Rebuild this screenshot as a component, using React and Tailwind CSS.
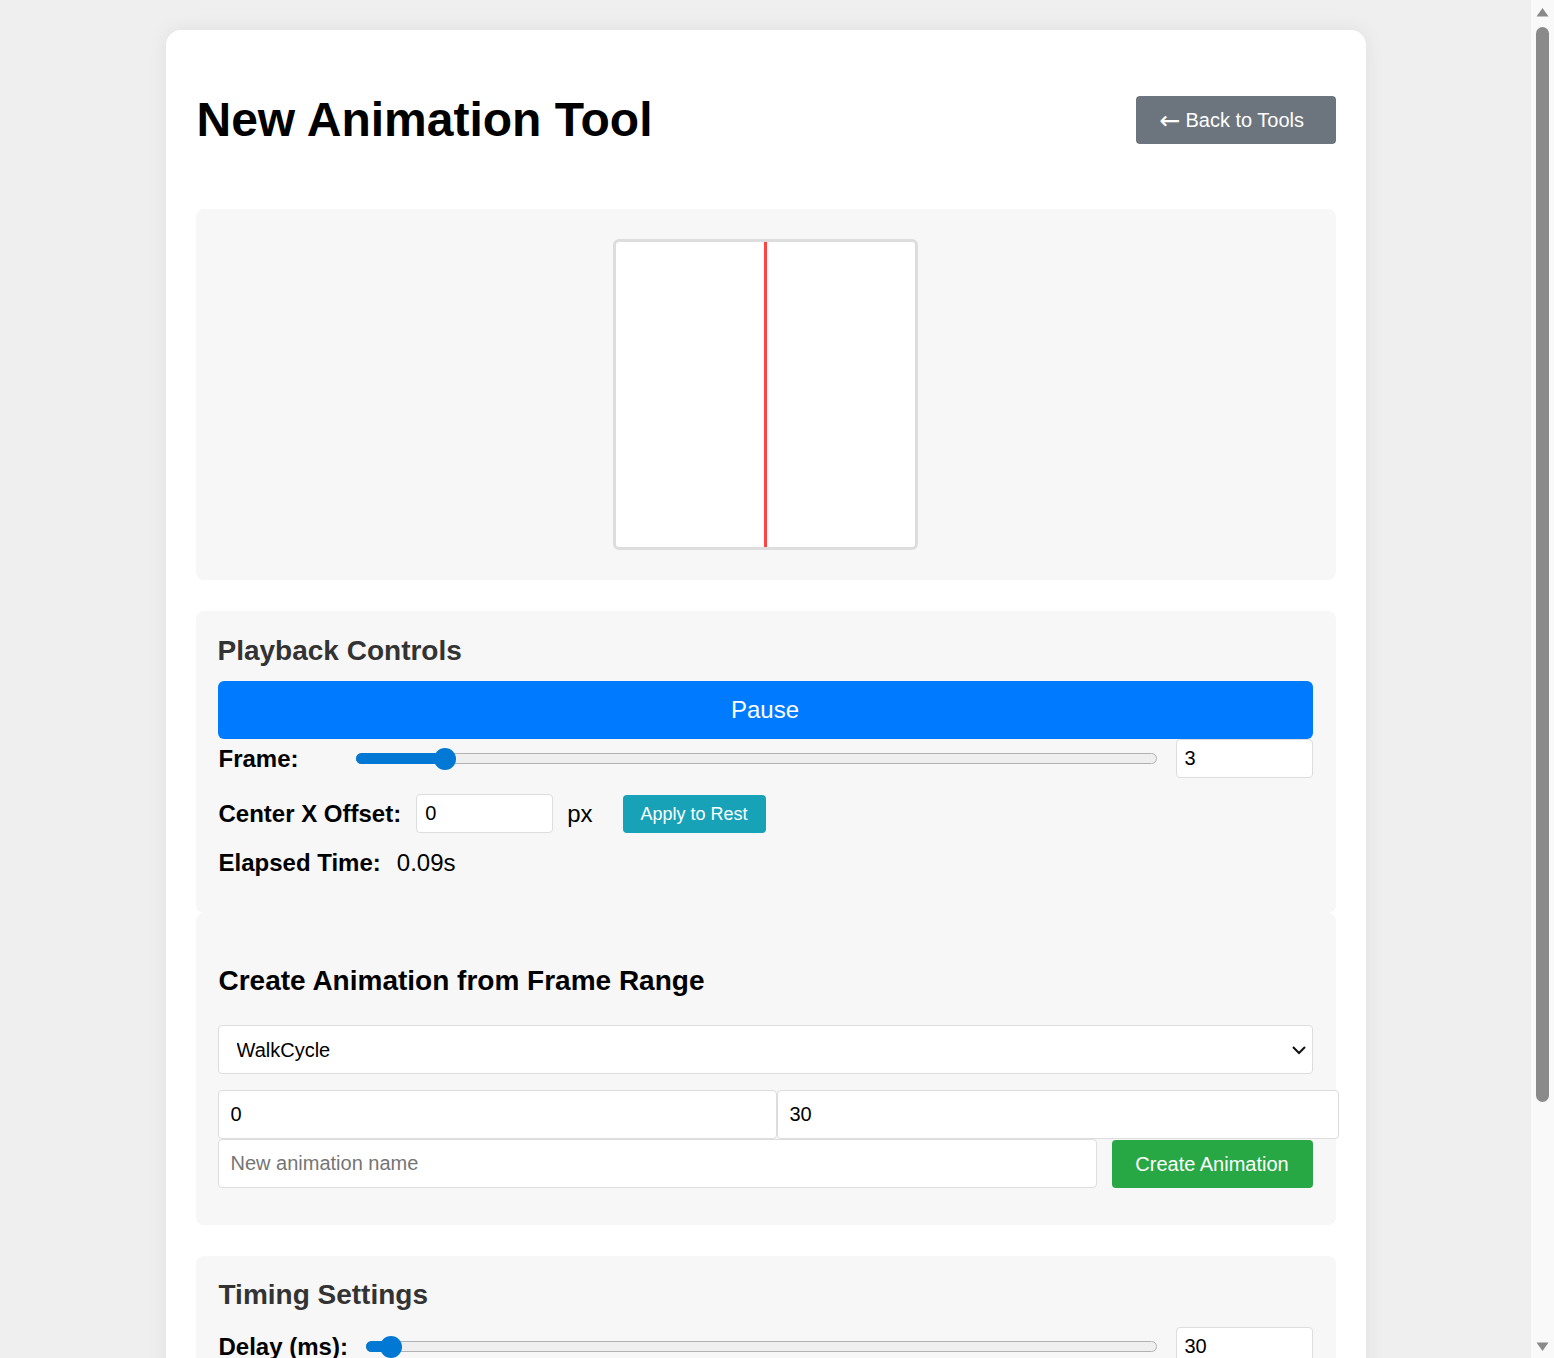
import { useState } from 'react';

function Slider({ fill, thumb }) {
  return (
    <div className="relative h-[22px] flex-1">
      <div className="absolute inset-x-0 top-[5px] h-[11px] rounded-full border border-[#b2b2b2] bg-[#efefef]"></div>
      <div className={`absolute left-0 top-[5px] h-[11px] rounded-full bg-[#0078d4] ${fill}`}></div>
      <div className={`absolute top-0 h-[22px] w-[22px] rounded-full bg-[#0078d4] ${thumb}`}></div>
    </div>
  );
}

export default function App() {
  const [frame, setFrame] = useState('3');
  const [offset, setOffset] = useState('0');
  const [start, setStart] = useState('0');
  const [end, setEnd] = useState('30');
  const [name, setName] = useState('');
  const [delay, setDelay] = useState('30');

  return (
    <div className="flex h-[1358px] overflow-hidden bg-[#efefef] font-['Liberation_Sans',Arial,sans-serif] text-black">
      <div className="w-[1531px] shrink-0 overflow-hidden pt-[30px]">
        <div className="mx-auto w-[1200px] rounded-[15px] bg-white px-[30px] pt-[30px] pb-[40px] shadow-[0_0_20px_rgba(0,0,0,0.07)]">
          {/* header */}
          <div className="flex h-[120px] items-center justify-between">
            <h1 className="pl-px text-[48px] font-bold leading-none">New Animation Tool</h1>
            <button className="flex h-12 w-[200px] items-center rounded bg-[#6c757d] pl-6 text-xl text-white">
              <span className="font-['DejaVu_Sans',sans-serif] text-[25px] leading-none">←</span>
              <span className="ml-[5px]">Back to Tools</span>
            </button>
          </div>

          {/* preview */}
          <div className="mt-[29px] flex justify-center rounded-lg bg-[#f7f7f7] py-[30px]">
            <div className="flex h-[311px] w-[305px] justify-center rounded-md border-[3px] border-[#dddddd] bg-white">
              <div className="h-full w-[3px] bg-[#ff4444]"></div>
            </div>
          </div>

          {/* playback */}
          <div className="mt-[31px] rounded-lg bg-[#f7f7f7] pl-[22px] pr-[23px] pt-[24px] pb-[36px]">
            <h2 className="text-[28px] font-bold leading-8 text-[#333333]">Playback Controls</h2>
            <button className="mt-[14px] h-[58px] w-full rounded-md bg-[#007bff] text-2xl text-white">Pause</button>
            <div className="flex h-[39px] items-center">
              <span className="w-[138px] pl-px text-2xl font-bold">Frame:</span>
              <Slider fill="w-[89px]" thumb="left-[78px]" />
              <input
                value={frame}
                onChange={(e) => setFrame(e.target.value)}
                className="ml-[19px] h-[39px] w-[137px] rounded border border-[#dddddd] bg-white px-2 text-xl outline-none"
              />
            </div>
            <div className="mt-4 flex h-[39px] items-center">
              <span className="pl-px text-2xl font-bold">Center X Offset:</span>
              <input
                value={offset}
                onChange={(e) => setOffset(e.target.value)}
                className="ml-[15px] h-[39px] w-[137px] rounded border border-[#dddddd] bg-white px-2 text-xl outline-none"
              />
              <span className="ml-[14px] text-2xl">px</span>
              <button className="ml-[30px] h-[38px] rounded bg-[#17a2b8] px-[18px] text-lg text-white">Apply to Rest</button>
            </div>
            <div className="mt-4 flex h-7 items-center text-2xl">
              <span className="pl-px font-bold">Elapsed Time:</span>
              <span className="ml-4">0.09s</span>
            </div>
          </div>

          {/* create from range */}
          <div className="rounded-lg bg-[#f7f7f7] pl-[22px] pr-[23px] pt-[52px] pb-[37px]">
            <h2 className="pl-px text-[28px] font-bold leading-8">Create Animation from Frame Range</h2>
            <div className="relative mt-[28px]">
              <select className="h-[49px] w-full appearance-none rounded border border-[#dddddd] bg-white pl-[18px] text-xl outline-none">
                <option>WalkCycle</option>
                <option>RunCycle</option>
                <option>Idle</option>
              </select>
              <svg className="pointer-events-none absolute right-[6px] top-[17px]" width="16" height="16" viewBox="0 0 16 16" fill="none" stroke="#111" strokeWidth="2">
                <polyline points="2,5 8,11 14,5" />
              </svg>
            </div>
            <div className="mt-4 flex">
              <input
                value={start}
                onChange={(e) => setStart(e.target.value)}
                className="h-[49px] w-[559px] shrink-0 rounded border border-[#dddddd] bg-white px-3 text-xl outline-none"
              />
              <input
                value={end}
                onChange={(e) => setEnd(e.target.value)}
                className="h-[49px] w-[562px] shrink-0 rounded border border-[#dddddd] bg-white px-3 text-xl outline-none"
              />
            </div>
            <div className="flex">
              <input
                value={name}
                onChange={(e) => setName(e.target.value)}
                placeholder="New animation name"
                className="h-[49px] flex-1 rounded border border-[#dddddd] bg-white px-3 text-xl outline-none placeholder:text-[#757575]"
              />
              <button className="ml-[15px] mt-px h-12 w-[201px] rounded bg-[#28a745] text-xl text-white">Create Animation</button>
            </div>
          </div>

          {/* timing */}
          <div className="mt-[31px] rounded-lg bg-[#f7f7f7] pl-[22px] pr-[23px] pt-[23px] pb-[37px]">
            <h2 className="pl-px text-[28px] font-bold leading-8 text-[#333333]">Timing Settings</h2>
            <div className="mt-4 flex h-[39px] items-center">
              <span className="w-[148px] pl-px text-2xl font-bold">Delay (ms):</span>
              <Slider fill="w-[25px]" thumb="left-[14px]" />
              <input
                value={delay}
                onChange={(e) => setDelay(e.target.value)}
                className="ml-[19px] h-[39px] w-[137px] rounded border border-[#dddddd] bg-white px-2 text-xl outline-none"
              />
            </div>
          </div>
        </div>
      </div>

      {/* scrollbar */}
      <div className="flex w-[23px] shrink-0 flex-col items-center bg-[#f9f9f9] pt-[7px] pb-[6px]">
        <svg width="13" height="10" viewBox="0 0 13 10"><polygon points="6.5,1 12.5,9.5 0.5,9.5" fill="#8a8a8a" /></svg>
        <div className="mt-[10px] h-[1075px] w-[13px] rounded-full bg-[#8a8a8a]"></div>
        <div className="flex-1"></div>
        <svg width="13" height="10" viewBox="0 0 13 10"><polygon points="0.5,0.5 12.5,0.5 6.5,9" fill="#8a8a8a" /></svg>
      </div>
    </div>
  );
}
